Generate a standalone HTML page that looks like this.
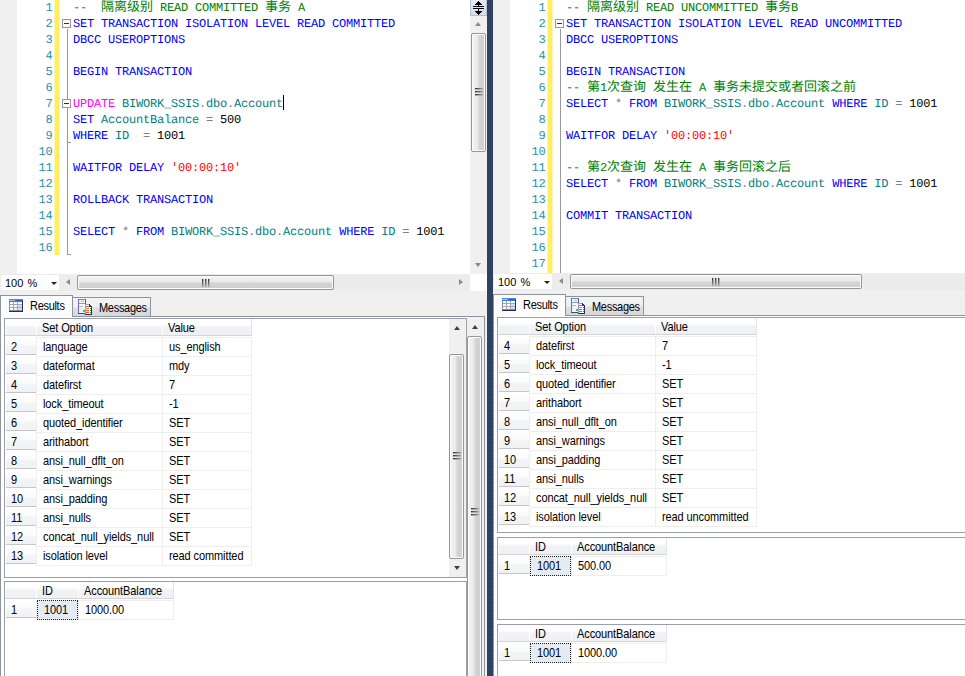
<!DOCTYPE html>
<html><head><meta charset="utf-8"><title>SSMS</title>
<style>
*{margin:0;padding:0;box-sizing:border-box}
html,body{width:965px;height:676px;overflow:hidden;background:#fff}
body{position:relative;font-family:"Liberation Sans",sans-serif;font-size:11px;color:#000}
.pane{position:absolute;top:0;height:676px;overflow:hidden;background:#f0f0f0}
.div{position:absolute;left:487px;top:0;width:6px;height:676px;background:#2b3c5d;
 background-image:radial-gradient(circle at 1px 1px,#3a4d70 0.6px,transparent 0.9px),radial-gradient(circle at 3px 3px,#3a4d70 0.6px,transparent 0.9px);background-size:4px 4px}
/* editor */
.ed{position:absolute;left:0;top:0;height:274px;background:#fff;overflow:hidden}
.mg{position:absolute;left:0;top:0;width:17px;height:274px;background:#f0f0f0}
.yb{position:absolute;left:54px;top:0;width:6px;background:linear-gradient(90deg,#fff6b1 0,#fff6b1 1px,#ffee62 1px,#ffee62 5px,#fff6b1 5px)}
.no,.ln{position:absolute;font-family:"Liberation Mono",monospace;font-size:12px;line-height:16px;height:16px;letter-spacing:-0.201px;white-space:pre;text-rendering:geometricPrecision}
.no{left:17px;width:35.5px;text-align:right;color:#2b91af}
.ln{left:73px}
.k{color:#0000ff}.t{color:#008080}.c{color:#008000}.s{color:#ff0000}.o{color:#808080}.n{color:#000}.m{color:#ff00ff}
.cj{display:inline-block;vertical-align:top;height:16px;line-height:16px;font-family:"Liberation Mono","Noto Sans CJK SC",monospace;font-size:13px;letter-spacing:0;color:#008000;white-space:nowrap;overflow:visible}
.vl{position:absolute;left:67px;width:1px;background:#999}
.hl{position:absolute;left:67px;width:4px;height:1px;background:#999}
.ob{position:absolute;left:62px;width:9px;height:9px;border:1px solid #969696;background:#fff}
.ob i{position:absolute;left:1px;top:3px;width:5px;height:1px;background:#303030}
.caret{position:absolute;left:283px;top:95px;width:1px;height:15px;background:#000}
/* scrollbars */
.vs{position:absolute;width:17px;background:#f0f0f0}
.au,.ad{position:absolute;left:5px;width:0;height:0;border-left:3.5px solid transparent;border-right:3.5px solid transparent}
.au{top:6px;border-bottom:4px solid #8a8a8a}
.ad{bottom:7px;border-top:4px solid #8a8a8a}
.gv .au,.ov .au{border-bottom-color:#404040}
.gv .au{top:7px}.ov .au{top:8px}
.gv .vt,.ov .vt{left:0;width:15px}
.gv .ad,.ov .ad{border-top-color:#404040}
.vt{position:absolute;left:1px;width:15px;border:1px solid #979797;border-radius:2px;background:linear-gradient(90deg,#f5f5f5 0%,#e9e9e9 45%,#d4d4d4 55%,#cfcfcf 100%);box-shadow:inset 0 0 0 1px #fbfbfb}
.vt .gp{position:absolute;left:3px;top:50%;margin-top:-5px}
.split{position:absolute;left:470px;top:0;width:17px;height:16px;background:linear-gradient(#e6ebf3,#d5dde9);border:1px solid #b4c0d3;border-top:0}
.split svg{position:absolute;left:-1px;top:0}
.corner{position:absolute;top:274px;width:17px;height:17px;background:#fff}
.low{position:absolute;left:0;width:100%;height:700px}
/* bottom bar */
.hbar{position:absolute;left:0;top:274px;height:17px;background:#ececec}
.zoom{position:absolute;left:1px;top:1px;width:58px;height:15px;background:#fff;font-size:11px;line-height:17px}
.zoom span{position:absolute;left:4px;top:0;word-spacing:1px}
.zoom i{position:absolute;left:50px;top:7px;width:0;height:0;border-left:3px solid transparent;border-right:3px solid transparent;border-top:3px solid #222}
.hal,.har{position:absolute;top:5px;width:0;height:0;border-top:3.5px solid transparent;border-bottom:3.5px solid transparent}
.hal{left:66px;border-right:4px solid #8a8a8a}
.har{right:7px;border-left:4px solid #8a8a8a}
.ht{position:absolute;top:1px;height:15px;border:1px solid #979797;border-radius:2px;background:linear-gradient(#f5f5f5 0%,#e9e9e9 45%,#d4d4d4 55%,#cfcfcf 100%);box-shadow:inset 0 0 0 1px #fbfbfb}
.ht .gp{position:absolute;top:3px;left:50%;margin-left:-4px}
/* tabs */
.tabpage{position:absolute;left:0;top:316px;height:400px;border:1px solid #8e949e;background:#fff}
.tabr{position:absolute;left:0;top:295px;width:73px;height:22px;background:#fcfcfc;border:1px solid #8e949e;border-bottom:0}
.tabm{position:absolute;left:72px;top:297px;width:79px;height:20px;background:linear-gradient(#f3f3f3 0,#efefef 9px,#dfdfdf 10px,#d6d6d6 19px);border:1px solid #8e949e}
.tabr span,.tabm span{position:absolute;font-size:11px;letter-spacing:-0.3px;line-height:14px}
.tabr span{left:29px;top:3px}
.tabm span{left:26px;top:3px}
.ic1{position:absolute;left:8px;top:3px}
.ic2{position:absolute;left:5px;top:1px}
/* grid */
.gd{position:absolute;background:#fff;border:1px solid #9a9fa9;overflow:hidden;font-size:11px;letter-spacing:-0.1px}
.hd{position:absolute;top:0;height:17px;line-height:19px;padding-left:6px;background:linear-gradient(#fff 0,#fff 6px,#f6f7f9 7px,#f1f2f5 8px,#eff0f4 16px);border-right:1px solid #e2e3e6;border-bottom:1px solid #d5d5d5;white-space:nowrap;box-shadow:inset 1px 0 0 #fff}
.tx{display:inline-block;transform:scaleY(1.125);transform-origin:0 69%}
.gl{position:absolute;height:1px;background:#eeeeee}
.gv2{position:absolute;width:1px;background:#eeeeee}
.rh,.cl{position:absolute;white-space:nowrap}
.rh{height:17px;line-height:18px;padding-left:5px;background:linear-gradient(#fefefe 0,#fcfcfc 7px,#f3f4f6 8px,#f1f2f5 16px);border-bottom:1px solid #c6c6c6}
.cl{height:20px;line-height:20px;padding-left:7px}
.cl.sel{background:#e5ebf3;border:1px dotted #222;padding-left:6px;line-height:18px}

</style></head>
<body>
<div class="pane" style="left:0;width:487px"><div class="ed" style="width:470px"><div class="mg"></div><div class="yb" style="height:255px"></div><div class="no" style="top:0px"><span>1</span></div><div class="ln" style="top:0px"><span class="c">--  </span><span class="cj" style="width:52px">隔离级别</span><span class="c"> READ COMMITTED </span><span class="cj" style="width:26px">事务</span><span class="c"> A</span></div><div class="no" style="top:16px"><span>2</span></div><div class="ln" style="top:16px"><span class="k">SET TRANSACTION ISOLATION LEVEL READ COMMITTED</span></div><div class="no" style="top:32px"><span>3</span></div><div class="ln" style="top:32px"><span class="k">DBCC USEROPTIONS</span></div><div class="no" style="top:48px"><span>4</span></div><div class="no" style="top:64px"><span>5</span></div><div class="ln" style="top:64px"><span class="k">BEGIN TRANSACTION</span></div><div class="no" style="top:80px"><span>6</span></div><div class="no" style="top:96px"><span>7</span></div><div class="ln" style="top:96px"><span class="m">UPDATE</span><span class="t"> BIWORK_SSIS</span><span class="o">.</span><span class="t">dbo</span><span class="o">.</span><span class="t">Account</span></div><div class="no" style="top:112px"><span>8</span></div><div class="ln" style="top:112px"><span class="k">SET</span><span class="t"> AccountBalance </span><span class="o">=</span><span class="n"> 500</span></div><div class="no" style="top:128px"><span>9</span></div><div class="ln" style="top:128px"><span class="k">WHERE</span><span class="t"> ID  </span><span class="o">=</span><span class="n"> 1001</span></div><div class="no" style="top:144px"><span>10</span></div><div class="no" style="top:160px"><span>11</span></div><div class="ln" style="top:160px"><span class="k">WAITFOR DELAY </span><span class="s">&#x27;00:00:10&#x27;</span></div><div class="no" style="top:176px"><span>12</span></div><div class="no" style="top:192px"><span>13</span></div><div class="ln" style="top:192px"><span class="k">ROLLBACK TRANSACTION</span></div><div class="no" style="top:208px"><span>14</span></div><div class="no" style="top:224px"><span>15</span></div><div class="ln" style="top:224px"><span class="k">SELECT </span><span class="o">*</span><span class="k"> FROM</span><span class="t"> BIWORK_SSIS</span><span class="o">.</span><span class="t">dbo</span><span class="o">.</span><span class="t">Account </span><span class="k">WHERE</span><span class="t"> ID </span><span class="o">=</span><span class="n"> 1001</span></div><div class="no" style="top:240px"><span>16</span></div><div class="vl" style="top:29px;height:70px"></div><div class="vl" style="top:108px;height:147px"></div><div class="hl" style="top:142px"></div><div class="hl" style="top:254px"></div><div class="ob" style="top:19px"><i></i></div><div class="ob" style="top:99px"><i></i></div><div class="caret"></div></div><div class="split"><svg width="17" height="16" viewBox="0 0 17 16" shape-rendering="crispEdges" fill="#000"><rect x="8" y="1" width="1" height="1"/><rect x="7" y="2" width="3" height="1"/><rect x="6" y="3" width="5" height="1"/><rect x="5" y="4" width="7" height="1"/><rect x="8" y="5" width="1" height="1"/><rect x="3" y="6" width="11" height="1"/><rect x="3" y="8" width="11" height="1"/><rect x="8" y="9" width="1" height="2"/><rect x="5" y="11" width="7" height="1"/><rect x="6" y="12" width="5" height="1"/><rect x="7" y="13" width="3" height="1"/><rect x="8" y="14" width="1" height="1"/></svg></div><div class="vs ev" style="left:470px;top:16px;height:258px;"><div class="au"></div><div class="ad"></div><div class="vt" style="top:17px;height:119px"><svg class="gp" width="8" height="8" viewBox="0 0 8 8" shape-rendering="crispEdges"><defs><linearGradient id="gh" x1="0" y1="0" x2="1" y2="0"><stop offset="0" stop-color="#2e2e2e"/><stop offset="1" stop-color="#a8a8a8"/></linearGradient></defs><rect x="0" y="0" width="8" height="1" fill="url(#gh)"/><rect x="0" y="1" width="8" height="1" fill="url(#gh)" opacity="0.4"/><rect x="0" y="3" width="8" height="1" fill="url(#gh)"/><rect x="0" y="4" width="8" height="1" fill="url(#gh)" opacity="0.4"/><rect x="0" y="6" width="8" height="1" fill="url(#gh)"/><rect x="0" y="7" width="8" height="1" fill="url(#gh)" opacity="0.4"/></svg></div></div><div class="corner" style="left:470px"></div><div class="hbar" style="width:470px"><div class="zoom"><span>100 %</span><i></i></div><div class="hal"></div><div class="har"></div><div class="ht" style="left:77px;width:257px"><svg class="gp" width="8" height="8" viewBox="0 0 8 8" shape-rendering="crispEdges"><defs><linearGradient id="gw" x1="0" y1="0" x2="0" y2="1"><stop offset="0" stop-color="#2e2e2e"/><stop offset="1" stop-color="#a8a8a8"/></linearGradient></defs><rect x="0" y="0" width="1" height="8" fill="url(#gw)"/><rect x="1" y="0" width="1" height="8" fill="url(#gw)" opacity="0.4"/><rect x="3" y="0" width="1" height="8" fill="url(#gw)"/><rect x="4" y="0" width="1" height="8" fill="url(#gw)" opacity="0.4"/><rect x="6" y="0" width="1" height="8" fill="url(#gw)"/><rect x="7" y="0" width="1" height="8" fill="url(#gw)" opacity="0.4"/></svg></div></div><div class="tabpage" style="width:485px"></div><div class="tabm"><svg class="ic2" width="14" height="16" viewBox="0 0 14 16" shape-rendering="crispEdges"><rect x="0" y="0" width="8" height="15" fill="#fbfcff"/><rect x="0" y="0" width="8" height="1" fill="#8e8e92"/><rect x="0" y="0" width="1" height="15" fill="#6c6cbc"/><rect x="7" y="0" width="1" height="6" fill="#5c5c94"/><rect x="1" y="14" width="7" height="1" fill="#2e5668"/><rect x="0" y="14" width="1" height="1" fill="#4a4a90"/><rect x="1" y="1" width="6" height="2" fill="#e4eefb"/><rect x="3" y="2" width="3" height="1" fill="#b8c6da"/><rect x="1" y="4" width="6" height="1" fill="#7fa2b2"/><rect x="1" y="5" width="6" height="1" fill="#f4f8ff"/><rect x="1" y="7" width="4" height="1" fill="#b4b8c8"/><rect x="1" y="8" width="6" height="6" fill="#eaf3fd"/><rect x="5" y="11" width="2" height="2" fill="#58c048"/><rect x="7" y="5" width="7" height="11" fill="#ffffff"/><rect x="7" y="5" width="4" height="1" fill="#7fb0b8"/><rect x="11" y="5" width="1" height="1" fill="#2a2a6a"/><rect x="12" y="6" width="1" height="1" fill="#2a2a6a"/><rect x="13" y="7" width="1" height="1" fill="#2a2a6a"/><rect x="11" y="6" width="1" height="1" fill="#3a3a7a"/><rect x="11" y="7" width="2" height="1" fill="#3a3a7a"/><rect x="13" y="7" width="1" height="8" fill="#2a2a6a"/><rect x="7" y="15" width="7" height="1" fill="#2a2a6a"/><rect x="6.999" y="6" width="1" height="9" fill="#9a9ac8"/><rect x="8" y="7" width="3" height="1" fill="#f46848"/><rect x="8" y="9" width="3" height="1" fill="#ff8444"/><rect x="8" y="11" width="3" height="1" fill="#f45434"/><rect x="8" y="13" width="3" height="1" fill="#f45024"/><rect x="12" y="9" width="1" height="1" fill="#3a8a3a"/><rect x="12" y="11" width="1" height="1" fill="#3a8a3a"/><rect x="12" y="13" width="1" height="1" fill="#3a8a3a"/></svg><span class="tx">Messages</span></div><div class="tabr"><svg class="ic1" width="14" height="13" viewBox="0 0 14 13" shape-rendering="crispEdges"><rect x="0" y="0" width="14" height="13" fill="#a6a6ae"/><rect x="0" y="0" width="14" height="1" fill="#4b87dc"/><rect x="0" y="1" width="6" height="1" fill="#a8c8f4"/><rect x="6" y="1" width="8" height="1" fill="#2c62d4"/><rect x="0" y="2" width="14" height="1" fill="#3a74d6"/><rect x="0" y="3" width="1" height="10" fill="#8c8ca0"/><rect x="13" y="2" width="1" height="11" fill="#2e2e44"/><rect x="0" y="12" width="14" height="1" fill="#2e2e40"/><rect x="1" y="3" width="3" height="2" fill="#ffffff"/><rect x="5" y="3" width="3" height="2" fill="#ffffff"/><rect x="9" y="3" width="4" height="2" fill="#ffffff"/><rect x="1" y="6" width="3" height="2" fill="#ffffff"/><rect x="5" y="6" width="3" height="2" fill="#ffffff"/><rect x="9" y="6" width="4" height="2" fill="#cfe4fb"/><rect x="1" y="9" width="3" height="2" fill="#ffffff"/><rect x="5" y="9" width="3" height="2" fill="#eef5fd"/><rect x="9" y="9" width="4" height="2" fill="#cfe4fb"/><rect x="1" y="11" width="12" height="1" fill="#8a8a92"/></svg><span class="tx">Results</span></div><div class="gd" style="left:4px;top:318px;width:463px;height:260px;"><div class="hd" style="left:0px;width:32px"><span class="tx"></span></div><div class="hd" style="left:31px;width:127px"><span class="tx">Set Option</span></div><div class="hd" style="left:157px;width:90px"><span class="tx">Value</span></div><div class="gl" style="left:31px;top:18px;width:215px"></div><div class="gl" style="left:31px;top:37px;width:215px"></div><div class="gl" style="left:31px;top:56px;width:215px"></div><div class="gl" style="left:31px;top:75px;width:215px"></div><div class="gl" style="left:31px;top:94px;width:215px"></div><div class="gl" style="left:31px;top:113px;width:215px"></div><div class="gl" style="left:31px;top:132px;width:215px"></div><div class="gl" style="left:31px;top:151px;width:215px"></div><div class="gl" style="left:31px;top:170px;width:215px"></div><div class="gl" style="left:31px;top:189px;width:215px"></div><div class="gl" style="left:31px;top:208px;width:215px"></div><div class="gl" style="left:31px;top:227px;width:215px"></div><div class="gl" style="left:31px;top:246px;width:215px"></div><div class="gv2" style="left:31px;top:18px;height:229px"></div><div class="gv2" style="left:157px;top:18px;height:229px"></div><div class="gv2" style="left:246px;top:18px;height:229px"></div><div class="rh" style="left:1px;top:19px;width:30px"><span class="tx">2</span></div><div class="cl" style="left:31px;top:18px;width:127px"><span class="tx">language</span></div><div class="cl" style="left:157px;top:18px;width:90px"><span class="tx">us_english</span></div><div class="rh" style="left:1px;top:38px;width:30px"><span class="tx">3</span></div><div class="cl" style="left:31px;top:37px;width:127px"><span class="tx">dateformat</span></div><div class="cl" style="left:157px;top:37px;width:90px"><span class="tx">mdy</span></div><div class="rh" style="left:1px;top:57px;width:30px"><span class="tx">4</span></div><div class="cl" style="left:31px;top:56px;width:127px"><span class="tx">datefirst</span></div><div class="cl" style="left:157px;top:56px;width:90px"><span class="tx">7</span></div><div class="rh" style="left:1px;top:76px;width:30px"><span class="tx">5</span></div><div class="cl" style="left:31px;top:75px;width:127px"><span class="tx">lock_timeout</span></div><div class="cl" style="left:157px;top:75px;width:90px"><span class="tx">-1</span></div><div class="rh" style="left:1px;top:95px;width:30px"><span class="tx">6</span></div><div class="cl" style="left:31px;top:94px;width:127px"><span class="tx">quoted_identifier</span></div><div class="cl" style="left:157px;top:94px;width:90px"><span class="tx">SET</span></div><div class="rh" style="left:1px;top:114px;width:30px"><span class="tx">7</span></div><div class="cl" style="left:31px;top:113px;width:127px"><span class="tx">arithabort</span></div><div class="cl" style="left:157px;top:113px;width:90px"><span class="tx">SET</span></div><div class="rh" style="left:1px;top:133px;width:30px"><span class="tx">8</span></div><div class="cl" style="left:31px;top:132px;width:127px"><span class="tx">ansi_null_dflt_on</span></div><div class="cl" style="left:157px;top:132px;width:90px"><span class="tx">SET</span></div><div class="rh" style="left:1px;top:152px;width:30px"><span class="tx">9</span></div><div class="cl" style="left:31px;top:151px;width:127px"><span class="tx">ansi_warnings</span></div><div class="cl" style="left:157px;top:151px;width:90px"><span class="tx">SET</span></div><div class="rh" style="left:1px;top:171px;width:30px"><span class="tx">10</span></div><div class="cl" style="left:31px;top:170px;width:127px"><span class="tx">ansi_padding</span></div><div class="cl" style="left:157px;top:170px;width:90px"><span class="tx">SET</span></div><div class="rh" style="left:1px;top:190px;width:30px"><span class="tx">11</span></div><div class="cl" style="left:31px;top:189px;width:127px"><span class="tx">ansi_nulls</span></div><div class="cl" style="left:157px;top:189px;width:90px"><span class="tx">SET</span></div><div class="rh" style="left:1px;top:209px;width:30px"><span class="tx">12</span></div><div class="cl" style="left:31px;top:208px;width:127px"><span class="tx">concat_null_yields_null</span></div><div class="cl" style="left:157px;top:208px;width:90px"><span class="tx">SET</span></div><div class="rh" style="left:1px;top:228px;width:30px"><span class="tx">13</span></div><div class="cl" style="left:31px;top:227px;width:127px"><span class="tx">isolation level</span></div><div class="cl" style="left:157px;top:227px;width:90px"><span class="tx">read committed</span></div></div><div class="vs gv" style="left:449px;top:319px;height:258px;"><div class="au"></div><div class="ad"></div><div class="vt" style="top:35px;height:205px"><svg class="gp" width="8" height="8" viewBox="0 0 8 8" shape-rendering="crispEdges"><defs><linearGradient id="gh" x1="0" y1="0" x2="1" y2="0"><stop offset="0" stop-color="#2e2e2e"/><stop offset="1" stop-color="#a8a8a8"/></linearGradient></defs><rect x="0" y="0" width="8" height="1" fill="url(#gh)"/><rect x="0" y="1" width="8" height="1" fill="url(#gh)" opacity="0.4"/><rect x="0" y="3" width="8" height="1" fill="url(#gh)"/><rect x="0" y="4" width="8" height="1" fill="url(#gh)" opacity="0.4"/><rect x="0" y="6" width="8" height="1" fill="url(#gh)"/><rect x="0" y="7" width="8" height="1" fill="url(#gh)" opacity="0.4"/></svg></div></div><div class="gd" style="left:4px;top:581px;width:463px;height:120px;border-bottom:0;"><div class="hd" style="left:0px;width:32px"><span class="tx"></span></div><div class="hd" style="left:31px;width:43px"><span class="tx">ID</span></div><div class="hd" style="left:73px;width:96px"><span class="tx">AccountBalance</span></div><div class="gl" style="left:31px;top:18px;width:137px"></div><div class="gl" style="left:31px;top:37px;width:137px"></div><div class="gv2" style="left:31px;top:18px;height:20px"></div><div class="gv2" style="left:73px;top:18px;height:20px"></div><div class="gv2" style="left:168px;top:18px;height:20px"></div><div class="rh" style="left:1px;top:19px;width:30px"><span class="tx">1</span></div><div class="cl sel" style="left:32px;top:18px;width:41px"><span class="tx">1001</span></div><div class="cl" style="left:73px;top:18px;width:96px"><span class="tx">1000.00</span></div></div><div class="vs ov" style="left:467px;top:317px;height:400px;"><div class="au"></div><div class="ad"></div><div class="vt" style="top:19px;height:353px"><svg class="gp" width="8" height="8" viewBox="0 0 8 8" shape-rendering="crispEdges"><defs><linearGradient id="gh" x1="0" y1="0" x2="1" y2="0"><stop offset="0" stop-color="#2e2e2e"/><stop offset="1" stop-color="#a8a8a8"/></linearGradient></defs><rect x="0" y="0" width="8" height="1" fill="url(#gh)"/><rect x="0" y="1" width="8" height="1" fill="url(#gh)" opacity="0.4"/><rect x="0" y="3" width="8" height="1" fill="url(#gh)"/><rect x="0" y="4" width="8" height="1" fill="url(#gh)" opacity="0.4"/><rect x="0" y="6" width="8" height="1" fill="url(#gh)"/><rect x="0" y="7" width="8" height="1" fill="url(#gh)" opacity="0.4"/></svg></div></div></div>
<div class="div"></div>
<div class="pane" style="left:493px;width:472px"><div class="ed" style="width:472px;height:273px"><div class="mg"></div><div class="yb" style="height:274px"></div><div class="no" style="top:0px"><span>1</span></div><div class="ln" style="top:0px"><span class="c">-- </span><span class="cj" style="width:52px">隔离级别</span><span class="c"> READ UNCOMMITTED </span><span class="cj" style="width:26px">事务</span><span class="c">B</span></div><div class="no" style="top:16px"><span>2</span></div><div class="ln" style="top:16px"><span class="k">SET TRANSACTION ISOLATION LEVEL READ UNCOMMITTED</span></div><div class="no" style="top:32px"><span>3</span></div><div class="ln" style="top:32px"><span class="k">DBCC USEROPTIONS</span></div><div class="no" style="top:48px"><span>4</span></div><div class="no" style="top:64px"><span>5</span></div><div class="ln" style="top:64px"><span class="k">BEGIN TRANSACTION</span></div><div class="no" style="top:80px"><span>6</span></div><div class="ln" style="top:80px"><span class="c">-- </span><span class="cj" style="width:13px">第</span><span class="c">1</span><span class="cj" style="width:39px">次查询</span><span class="c"> </span><span class="cj" style="width:39px">发生在</span><span class="c"> A </span><span class="cj" style="width:143px">事务未提交或者回滚之前</span></div><div class="no" style="top:96px"><span>7</span></div><div class="ln" style="top:96px"><span class="k">SELECT </span><span class="o">*</span><span class="k"> FROM</span><span class="t"> BIWORK_SSIS</span><span class="o">.</span><span class="t">dbo</span><span class="o">.</span><span class="t">Account </span><span class="k">WHERE</span><span class="t"> ID </span><span class="o">=</span><span class="n"> 1001</span></div><div class="no" style="top:112px"><span>8</span></div><div class="no" style="top:128px"><span>9</span></div><div class="ln" style="top:128px"><span class="k">WAITFOR DELAY </span><span class="s">&#x27;00:00:10&#x27;</span></div><div class="no" style="top:144px"><span>10</span></div><div class="no" style="top:160px"><span>11</span></div><div class="ln" style="top:160px"><span class="c">-- </span><span class="cj" style="width:13px">第</span><span class="c">2</span><span class="cj" style="width:39px">次查询</span><span class="c"> </span><span class="cj" style="width:39px">发生在</span><span class="c"> A </span><span class="cj" style="width:78px">事务回滚之后</span></div><div class="no" style="top:176px"><span>12</span></div><div class="ln" style="top:176px"><span class="k">SELECT </span><span class="o">*</span><span class="k"> FROM</span><span class="t"> BIWORK_SSIS</span><span class="o">.</span><span class="t">dbo</span><span class="o">.</span><span class="t">Account </span><span class="k">WHERE</span><span class="t"> ID </span><span class="o">=</span><span class="n"> 1001</span></div><div class="no" style="top:192px"><span>13</span></div><div class="no" style="top:208px"><span>14</span></div><div class="ln" style="top:208px"><span class="k">COMMIT TRANSACTION</span></div><div class="no" style="top:224px"><span>15</span></div><div class="no" style="top:240px"><span>16</span></div><div class="no" style="top:256px"><span>17</span></div><div class="vl" style="top:29px;height:245px"></div><div class="ob" style="top:19px"><i></i></div></div><div class="low" style="top:-1px"><div class="hbar" style="width:472px"><div class="zoom"><span>100 %</span><i></i></div><div class="hal"></div><div class="ht" style="left:77px;width:292px"><svg class="gp" width="8" height="8" viewBox="0 0 8 8" shape-rendering="crispEdges"><defs><linearGradient id="gw" x1="0" y1="0" x2="0" y2="1"><stop offset="0" stop-color="#2e2e2e"/><stop offset="1" stop-color="#a8a8a8"/></linearGradient></defs><rect x="0" y="0" width="1" height="8" fill="url(#gw)"/><rect x="1" y="0" width="1" height="8" fill="url(#gw)" opacity="0.4"/><rect x="3" y="0" width="1" height="8" fill="url(#gw)"/><rect x="4" y="0" width="1" height="8" fill="url(#gw)" opacity="0.4"/><rect x="6" y="0" width="1" height="8" fill="url(#gw)"/><rect x="7" y="0" width="1" height="8" fill="url(#gw)" opacity="0.4"/></svg></div></div><div class="tabpage" style="width:480px;border-right:0"></div><div class="tabm"><svg class="ic2" width="14" height="16" viewBox="0 0 14 16" shape-rendering="crispEdges"><rect x="0" y="0" width="8" height="15" fill="#fbfcff"/><rect x="0" y="0" width="8" height="1" fill="#8e8e92"/><rect x="0" y="0" width="1" height="15" fill="#6c6cbc"/><rect x="7" y="0" width="1" height="6" fill="#5c5c94"/><rect x="1" y="14" width="7" height="1" fill="#2e5668"/><rect x="0" y="14" width="1" height="1" fill="#4a4a90"/><rect x="1" y="1" width="6" height="2" fill="#e4eefb"/><rect x="3" y="2" width="3" height="1" fill="#b8c6da"/><rect x="1" y="4" width="6" height="1" fill="#7fa2b2"/><rect x="1" y="5" width="6" height="1" fill="#f4f8ff"/><rect x="1" y="7" width="4" height="1" fill="#b4b8c8"/><rect x="1" y="8" width="6" height="6" fill="#eaf3fd"/><rect x="5" y="11" width="2" height="2" fill="#58c048"/><rect x="7" y="5" width="7" height="11" fill="#ffffff"/><rect x="7" y="5" width="4" height="1" fill="#7fb0b8"/><rect x="11" y="5" width="1" height="1" fill="#2a2a6a"/><rect x="12" y="6" width="1" height="1" fill="#2a2a6a"/><rect x="13" y="7" width="1" height="1" fill="#2a2a6a"/><rect x="11" y="6" width="1" height="1" fill="#3a3a7a"/><rect x="11" y="7" width="2" height="1" fill="#3a3a7a"/><rect x="13" y="7" width="1" height="8" fill="#2a2a6a"/><rect x="7" y="15" width="7" height="1" fill="#2a2a6a"/><rect x="6.999" y="6" width="1" height="9" fill="#9a9ac8"/><rect x="8" y="7" width="3" height="1" fill="#f46848"/><rect x="8" y="9" width="3" height="1" fill="#ff8444"/><rect x="8" y="11" width="3" height="1" fill="#f45434"/><rect x="8" y="13" width="3" height="1" fill="#f45024"/><rect x="12" y="9" width="1" height="1" fill="#3a8a3a"/><rect x="12" y="11" width="1" height="1" fill="#3a8a3a"/><rect x="12" y="13" width="1" height="1" fill="#3a8a3a"/></svg><span class="tx">Messages</span></div><div class="tabr"><svg class="ic1" width="14" height="13" viewBox="0 0 14 13" shape-rendering="crispEdges"><rect x="0" y="0" width="14" height="13" fill="#a6a6ae"/><rect x="0" y="0" width="14" height="1" fill="#4b87dc"/><rect x="0" y="1" width="6" height="1" fill="#a8c8f4"/><rect x="6" y="1" width="8" height="1" fill="#2c62d4"/><rect x="0" y="2" width="14" height="1" fill="#3a74d6"/><rect x="0" y="3" width="1" height="10" fill="#8c8ca0"/><rect x="13" y="2" width="1" height="11" fill="#2e2e44"/><rect x="0" y="12" width="14" height="1" fill="#2e2e40"/><rect x="1" y="3" width="3" height="2" fill="#ffffff"/><rect x="5" y="3" width="3" height="2" fill="#ffffff"/><rect x="9" y="3" width="4" height="2" fill="#ffffff"/><rect x="1" y="6" width="3" height="2" fill="#ffffff"/><rect x="5" y="6" width="3" height="2" fill="#ffffff"/><rect x="9" y="6" width="4" height="2" fill="#cfe4fb"/><rect x="1" y="9" width="3" height="2" fill="#ffffff"/><rect x="5" y="9" width="3" height="2" fill="#eef5fd"/><rect x="9" y="9" width="4" height="2" fill="#cfe4fb"/><rect x="1" y="11" width="12" height="1" fill="#8a8a92"/></svg><span class="tx">Results</span></div><div class="gd" style="left:4px;top:318px;width:480px;height:216px;border-right:0;"><div class="hd" style="left:0px;width:32px"><span class="tx"></span></div><div class="hd" style="left:31px;width:127px"><span class="tx">Set Option</span></div><div class="hd" style="left:157px;width:102px"><span class="tx">Value</span></div><div class="gl" style="left:31px;top:18px;width:227px"></div><div class="gl" style="left:31px;top:37px;width:227px"></div><div class="gl" style="left:31px;top:56px;width:227px"></div><div class="gl" style="left:31px;top:75px;width:227px"></div><div class="gl" style="left:31px;top:94px;width:227px"></div><div class="gl" style="left:31px;top:113px;width:227px"></div><div class="gl" style="left:31px;top:132px;width:227px"></div><div class="gl" style="left:31px;top:151px;width:227px"></div><div class="gl" style="left:31px;top:170px;width:227px"></div><div class="gl" style="left:31px;top:189px;width:227px"></div><div class="gl" style="left:31px;top:208px;width:227px"></div><div class="gv2" style="left:31px;top:18px;height:191px"></div><div class="gv2" style="left:157px;top:18px;height:191px"></div><div class="gv2" style="left:258px;top:18px;height:191px"></div><div class="rh" style="left:1px;top:19px;width:30px"><span class="tx">4</span></div><div class="cl" style="left:31px;top:18px;width:127px"><span class="tx">datefirst</span></div><div class="cl" style="left:157px;top:18px;width:102px"><span class="tx">7</span></div><div class="rh" style="left:1px;top:38px;width:30px"><span class="tx">5</span></div><div class="cl" style="left:31px;top:37px;width:127px"><span class="tx">lock_timeout</span></div><div class="cl" style="left:157px;top:37px;width:102px"><span class="tx">-1</span></div><div class="rh" style="left:1px;top:57px;width:30px"><span class="tx">6</span></div><div class="cl" style="left:31px;top:56px;width:127px"><span class="tx">quoted_identifier</span></div><div class="cl" style="left:157px;top:56px;width:102px"><span class="tx">SET</span></div><div class="rh" style="left:1px;top:76px;width:30px"><span class="tx">7</span></div><div class="cl" style="left:31px;top:75px;width:127px"><span class="tx">arithabort</span></div><div class="cl" style="left:157px;top:75px;width:102px"><span class="tx">SET</span></div><div class="rh" style="left:1px;top:95px;width:30px"><span class="tx">8</span></div><div class="cl" style="left:31px;top:94px;width:127px"><span class="tx">ansi_null_dflt_on</span></div><div class="cl" style="left:157px;top:94px;width:102px"><span class="tx">SET</span></div><div class="rh" style="left:1px;top:114px;width:30px"><span class="tx">9</span></div><div class="cl" style="left:31px;top:113px;width:127px"><span class="tx">ansi_warnings</span></div><div class="cl" style="left:157px;top:113px;width:102px"><span class="tx">SET</span></div><div class="rh" style="left:1px;top:133px;width:30px"><span class="tx">10</span></div><div class="cl" style="left:31px;top:132px;width:127px"><span class="tx">ansi_padding</span></div><div class="cl" style="left:157px;top:132px;width:102px"><span class="tx">SET</span></div><div class="rh" style="left:1px;top:152px;width:30px"><span class="tx">11</span></div><div class="cl" style="left:31px;top:151px;width:127px"><span class="tx">ansi_nulls</span></div><div class="cl" style="left:157px;top:151px;width:102px"><span class="tx">SET</span></div><div class="rh" style="left:1px;top:171px;width:30px"><span class="tx">12</span></div><div class="cl" style="left:31px;top:170px;width:127px"><span class="tx">concat_null_yields_null</span></div><div class="cl" style="left:157px;top:170px;width:102px"><span class="tx">SET</span></div><div class="rh" style="left:1px;top:190px;width:30px"><span class="tx">13</span></div><div class="cl" style="left:31px;top:189px;width:127px"><span class="tx">isolation level</span></div><div class="cl" style="left:157px;top:189px;width:102px"><span class="tx">read uncommitted</span></div></div><div class="gd" style="left:4px;top:538px;width:480px;height:83px;border-right:0;"><div class="hd" style="left:0px;width:32px"><span class="tx"></span></div><div class="hd" style="left:31px;width:43px"><span class="tx">ID</span></div><div class="hd" style="left:73px;width:96px"><span class="tx">AccountBalance</span></div><div class="gl" style="left:31px;top:18px;width:137px"></div><div class="gl" style="left:31px;top:37px;width:137px"></div><div class="gv2" style="left:31px;top:18px;height:20px"></div><div class="gv2" style="left:73px;top:18px;height:20px"></div><div class="gv2" style="left:168px;top:18px;height:20px"></div><div class="rh" style="left:1px;top:19px;width:30px"><span class="tx">1</span></div><div class="cl sel" style="left:32px;top:18px;width:41px"><span class="tx">1001</span></div><div class="cl" style="left:73px;top:18px;width:96px"><span class="tx">500.00</span></div></div><div class="gd" style="left:4px;top:625px;width:480px;height:83px;border-bottom:0;border-right:0;"><div class="hd" style="left:0px;width:32px"><span class="tx"></span></div><div class="hd" style="left:31px;width:43px"><span class="tx">ID</span></div><div class="hd" style="left:73px;width:96px"><span class="tx">AccountBalance</span></div><div class="gl" style="left:31px;top:18px;width:137px"></div><div class="gl" style="left:31px;top:37px;width:137px"></div><div class="gv2" style="left:31px;top:18px;height:20px"></div><div class="gv2" style="left:73px;top:18px;height:20px"></div><div class="gv2" style="left:168px;top:18px;height:20px"></div><div class="rh" style="left:1px;top:19px;width:30px"><span class="tx">1</span></div><div class="cl sel" style="left:32px;top:18px;width:41px"><span class="tx">1001</span></div><div class="cl" style="left:73px;top:18px;width:96px"><span class="tx">1000.00</span></div></div></div></div>
</body></html>
